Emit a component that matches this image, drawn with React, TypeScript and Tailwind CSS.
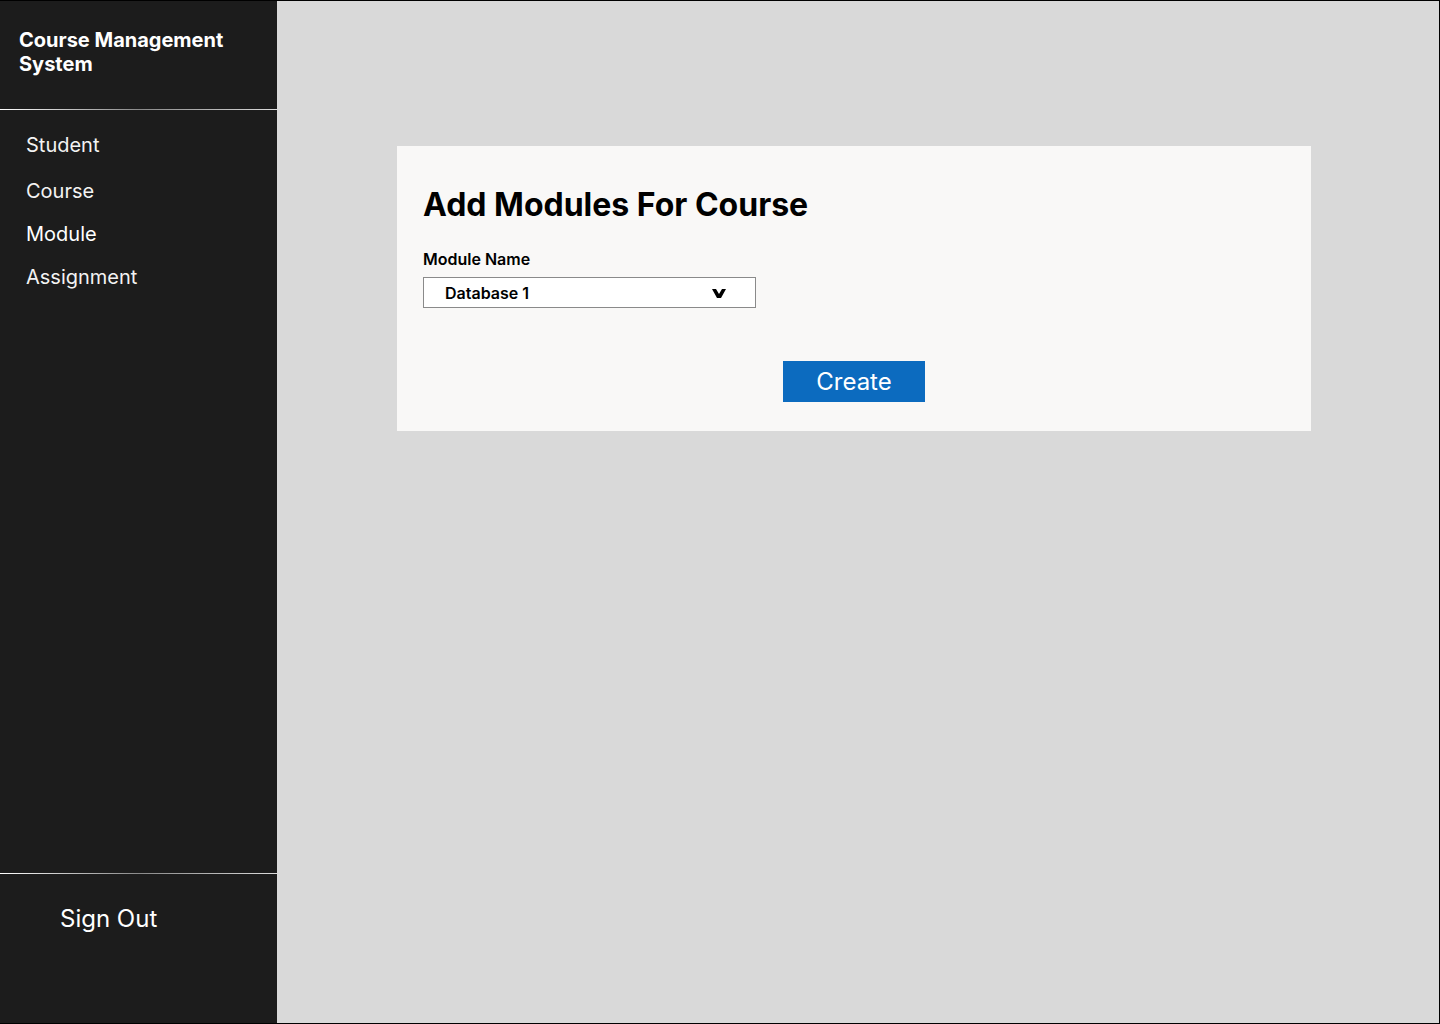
import { useState } from "react";

const navItems = ["Student", "Course", "Module", "Assignment"];

function Divider() {
  return <div className="h-px w-full bg-gradient-to-r from-white via-[#8a8a8a] to-[#dcdcdc]" />;
}

export default function App() {
  const [active, setActive] = useState("Module");

  return (
    <div className="flex h-[1024px] w-[1440px] border-y border-r border-black font-['Inter','Noto_Sans',sans-serif]">
      <aside className="flex w-[277px] shrink-0 flex-col bg-[#1c1c1c] text-white">
        <div className="h-[108px] pl-[19px] pt-[27px]">
          <h1 className="text-[20px] font-bold leading-[24px]">
            Course Management
            <br />
            System
          </h1>
        </div>
        <Divider />
        <nav className="flex flex-col gap-[19px] pl-[26px] pt-[23px]">
          {navItems.map((item, i) => (
            <button
              key={item}
              onClick={() => setActive(item)}
              className={`text-left text-[20px] leading-[24px] text-white ${i === 1 ? "mt-[3px]" : ""} ${
                active === item ? "opacity-100" : "opacity-95"
              }`}
            >
              {item}
            </button>
          ))}
        </nav>
        <div className="flex-1" />
        <Divider />
        <div className="h-[149px] pl-[60px] pt-[29px]">
          <button className="text-[24px] leading-[32px] text-white">Sign Out</button>
        </div>
      </aside>

      <main className="flex-1 bg-[#d9d9d9] pl-[120px] pt-[145px]">
        <div className="flex h-[285px] w-[914px] flex-col bg-[#f9f8f7] pl-[26px]">
          <h2 className="mt-[39px] text-[32px] font-bold leading-[40px] text-black">Add Modules For Course</h2>
          <label className="mt-[24px] text-[16px] font-semibold leading-[20px] text-black">Module Name</label>
          <div className="mt-[8px] flex h-[31px] w-[333px] items-center justify-between border border-[#8a8a8a] bg-white pl-[21px] pr-[29px]">
            <span className="text-[16px] font-semibold leading-[20px] text-black">Database 1</span>
            <svg width="14" height="9" viewBox="0 0 14 9" fill="black" className="mt-[1px]">
              <polygon points="0,0 4,0 7,5 10,0 14,0 9,9 5,9" />
            </svg>
          </div>
          <div className="mt-[53px] flex justify-center pr-[26px]">
            <button className="h-[41px] w-[142px] bg-[#0c6bbf] text-[24px] leading-[32px] text-white">Create</button>
          </div>
        </div>
      </main>
    </div>
  );
}
